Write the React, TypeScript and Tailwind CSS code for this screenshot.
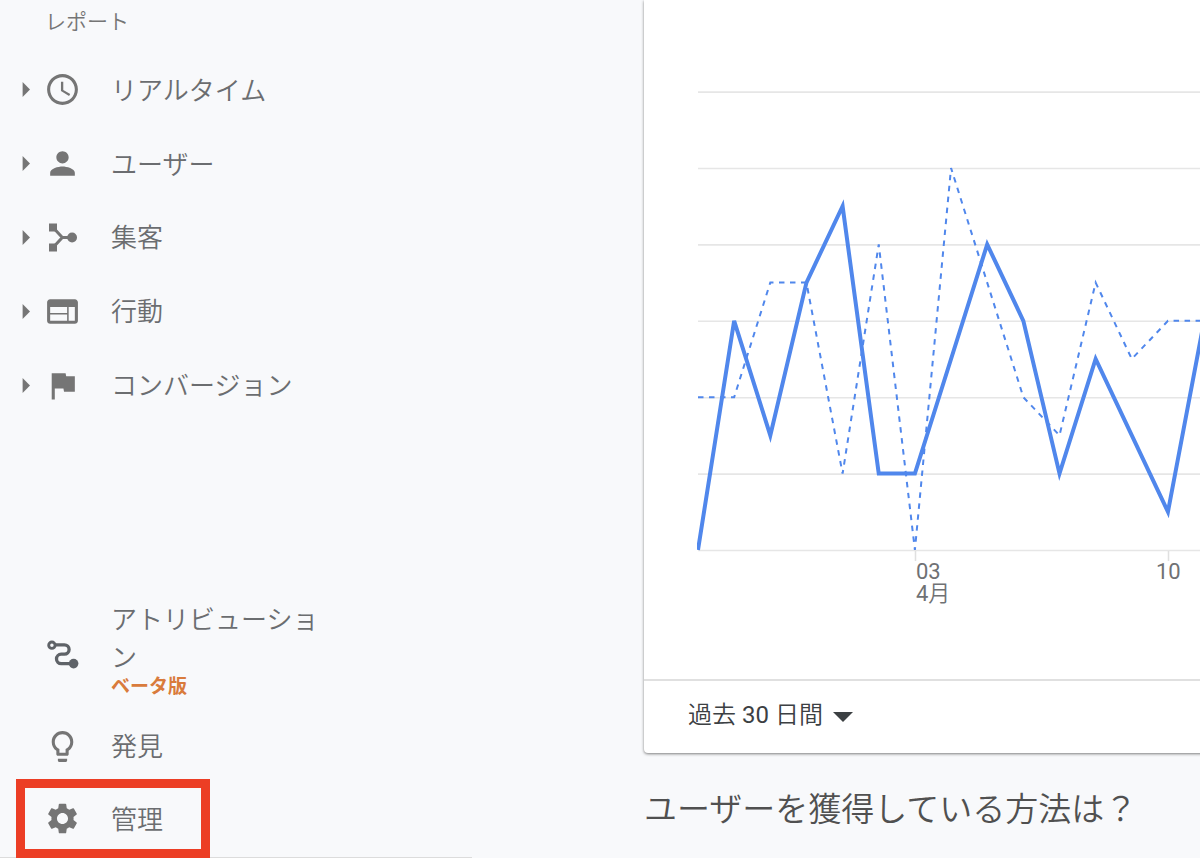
import type { ReactNode } from "react";
import { MdAccessTime, MdFlag, MdLightbulbOutline, MdPerson, MdSettings, MdWeb } from "react-icons/md";

function AcquisitionIcon() {
  return (
    <svg viewBox="0 0 37 37" className="size-[37px]" fill="currentColor" aria-hidden="true">
      <rect x="5" y="4.5" width="8" height="8" />
      <rect x="5" y="24.5" width="8" height="8" />
      <path d="M10 9.5 18.3 18.5 10 27.5M18 18.5H28" fill="none" stroke="currentColor" strokeWidth="3" />
      <circle cx="28.1" cy="18.5" r="4.9" />
    </svg>
  );
}

function AttributionIcon() {
  return (
    <svg viewBox="0 0 37 37" className="size-[37px]" fill="none" stroke="currentColor" strokeWidth="3.3" aria-hidden="true">
      <circle cx="7.9" cy="9.2" r="3.2" strokeWidth="2.9" />
      <path d="M11 8.8H20.4A4.7 4.7 0 0 1 20.4 18.2H17.2A4.7 4.7 0 0 0 17.2 27.6H28" />
      <circle cx="29.6" cy="27.6" r="4.8" fill="currentColor" stroke="none" />
    </svg>
  );
}

const reports: { label: string; icon: ReactNode }[] = [
  { label: "リアルタイム", icon: <MdAccessTime className="size-[37px]" /> },
  { label: "ユーザー", icon: <MdPerson className="size-[37px]" /> },
  { label: "集客", icon: <AcquisitionIcon /> },
  { label: "行動", icon: <MdWeb className="size-[37px]" /> },
  { label: "コンバージョン", icon: <MdFlag className="size-[37px]" /> },
];

function Sidebar() {
  return (
    <aside className="flex min-h-screen w-[472px] shrink-0 flex-col border-b border-[#dcdcdc] text-[#757575]">
      <h2 className="h-[53px] pl-[45px] pt-[7px] text-[21px] leading-[30px]">レポート</h2>
      <nav className="flex flex-1 flex-col" aria-label="レポート">
        <ul className="flex h-[369px] flex-col">
          {reports.map((item) => (
            <li key={item.label} className="flex flex-1">
              <button type="button" className="flex w-full items-center pl-[22px] text-left">
                <svg viewBox="0 0 8 15" className="mr-3.5 h-[15px] w-2" fill="currentColor" aria-hidden="true">
                  <path d="M0.6 0 8 7.5 0.6 15Z" />
                </svg>
                {item.icon}
                <span className="ml-[30px] pt-0.5 text-[26px] leading-[38px] text-[#6b6d70]">{item.label}</span>
              </button>
            </li>
          ))}
        </ul>
        <div className="mt-auto flex flex-col">
          <button type="button" className="flex h-[118px] items-center pl-11 text-left">
            <span className="text-[#5f6368]">
              <AttributionIcon />
            </span>
            <span className="ml-[30px] flex w-[212px] flex-col self-start pt-1.5">
              <span className="text-[26px] leading-[38px] text-[#6b6d70]">アトリビューション</span>
              <span className="text-[19px] font-bold leading-5 text-[#d97b3c]">ベータ版</span>
            </span>
          </button>
          <button type="button" className="flex h-[66px] items-center pl-11 text-left">
            <MdLightbulbOutline className="size-[37px]" />
            <span className="ml-[30px] pt-0.5 text-[26px] leading-[38px] text-[#6b6d70]">発見</span>
          </button>
          <button
            type="button"
            className="relative -mb-px ml-4 flex h-[79px] w-[194px] items-center border-[9px] border-[#ec3e25] pl-[19px] text-left"
          >
            <MdSettings className="size-[37px]" />
            <span className="ml-[30px] pt-0.5 text-[26px] leading-[38px] text-[#6b6d70]">管理</span>
          </button>
        </div>
      </nav>
    </aside>
  );
}

const BASELINE = 550;
const UNIT = 38.2;
const STEP = 36.15;
const current = [0, 6, 3, 7, 9, 2, 2, 5, 8, 6, 2, 5, 3, 1, 6];
const previous = [4, 4, 7, 7, 2, 8, 0, 10, 7, 4, 3, 7, 5, 6, 6];
const gridValues = [0, 2, 4, 6, 8, 10, 12];

function toPoints(values: number[]) {
  return values.map((v, i) => `${i * STEP + 1},${BASELINE - v * UNIT}`).join(" ");
}

function UsersChart() {
  return (
    <figure>
      <svg className="block h-[561px] w-full" role="img" aria-label="過去 30 日間のユーザー">
        {gridValues.map((v) => (
          <line key={v} x1="1" x2="100%" y1={BASELINE + 0.5 - v * UNIT} y2={BASELINE + 0.5 - v * UNIT} stroke="#e6e6e6" strokeWidth="1.6" />
        ))}
        <path d="M218.5 551V561M471.5 551V561" stroke="#e0e0e0" strokeWidth="1.5" />
        <polyline points={toPoints(previous)} fill="none" stroke="#5087ec" strokeWidth="2" strokeDasharray="5.5 5.5" />
        <polyline points={toPoints(current)} fill="none" stroke="#5087ec" strokeWidth="4" />
      </svg>
      <figcaption className="flex pl-[219px] font-['Roboto','Noto_Sans_CJK_JP_DemiLight','Noto_Sans_CJK_JP',sans-serif] text-[22px] font-normal leading-[22px] text-[#6f7174]">
        <p className="w-60">
          03
          <br />
          4月
        </p>
        <p>10</p>
      </figcaption>
    </figure>
  );
}

export default function App() {
  return (
    <div className="flex min-h-screen overflow-hidden bg-[#f8f9fb] font-['Roboto','Noto_Sans_CJK_JP',sans-serif] font-[350]">
      <Sidebar />
      <main className="min-w-0 flex-1 pl-[172px]">
        <section className="-mr-2 rounded-b bg-white shadow-[0_1px_3px_rgba(0,0,0,0.5)]">
          <div className="h-[679px] pl-[53px]">
            <UsersChart />
          </div>
          <div className="flex h-[74px] items-center gap-2.5 border-t-2 border-[#e0e0e0] pb-1 pl-11 text-[#3c4043]">
            <select
              aria-label="期間"
              className="appearance-none bg-transparent font-['Roboto','Noto_Sans_CJK_JP_DemiLight','Noto_Sans_CJK_JP',sans-serif] text-[24px] font-normal leading-9"
            >
              <option>過去 30 日間</option>
            </select>
            <svg viewBox="0 0 20 10" className="mt-1 h-2.5 w-5" fill="currentColor" aria-hidden="true">
              <path d="M0 0H20L10 10Z" />
            </svg>
          </div>
        </section>
        <h2 className="mt-[33px] whitespace-nowrap text-[33px] leading-[48px] text-[#505050]">ユーザーを獲得している方法は？</h2>
      </main>
    </div>
  );
}
